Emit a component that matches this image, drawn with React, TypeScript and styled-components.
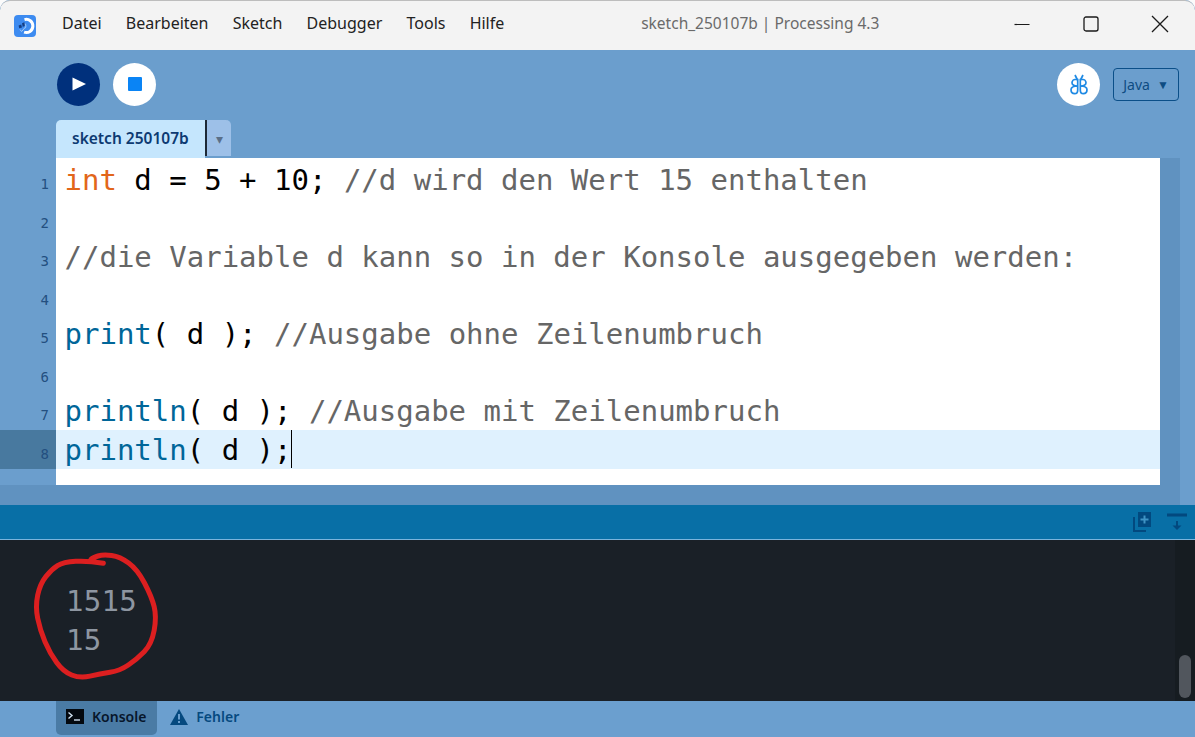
import React from 'react';
import styled, { createGlobalStyle } from 'styled-components';

const GlobalStyle = createGlobalStyle`
  html, body {
    margin: 0;
    padding: 0;
    background: #fbfbfb;
    overflow: hidden;
  }
`;

const menus = ['Datei', 'Bearbeiten', 'Sketch', 'Debugger', 'Tools', 'Hilfe'];

type Token = { text: string; kind: 'plain' | 'keyword' | 'func' | 'comment' };

const lines: Token[][] = [
  [
    { text: 'int', kind: 'keyword' },
    { text: ' d = 5 + 10; ', kind: 'plain' },
    { text: '//d wird den Wert 15 enthalten', kind: 'comment' },
  ],
  [],
  [{ text: '//die Variable d kann so in der Konsole ausgegeben werden:', kind: 'comment' }],
  [],
  [
    { text: 'print', kind: 'func' },
    { text: '( d ); ', kind: 'plain' },
    { text: '//Ausgabe ohne Zeilenumbruch', kind: 'comment' },
  ],
  [],
  [
    { text: 'println', kind: 'func' },
    { text: '( d ); ', kind: 'plain' },
    { text: '//Ausgabe mit Zeilenumbruch', kind: 'comment' },
  ],
  [
    { text: 'println', kind: 'func' },
    { text: '( d );', kind: 'plain' },
  ],
];

const ACTIVE_LINE = 7;

// traced from the hand drawn ring, in 3x units
const ringPoints = [
  [250, 70], [205, 62], [130, 66], [95, 88], [60, 132], [46, 200], [60, 270], [90, 340],
  [130, 395], [180, 415], [240, 402], [300, 392], [350, 358], [395, 312], [410, 230],
  [395, 170], [352, 88], [300, 50], [250, 43], [218, 53], [207, 64],
];

function ringPath() {
  let d = `M${ringPoints[0][0]} ${ringPoints[0][1]}`;
  for (let i = 1; i < ringPoints.length - 1; i++) {
    const [x, y] = ringPoints[i];
    const [nx, ny] = ringPoints[i + 1];
    d += ` Q${x} ${y} ${(x + nx) / 2} ${(y + ny) / 2}`;
  }
  return d;
}

export default function App() {
  return (
    <Window>
      <GlobalStyle />
      <TitleBar>
        <Logo viewBox="0 0 22 22">
          <rect width="22" height="22" rx="4" fill="#3d8bf0" />
          <path d="M10.5 4.6 a6.6 6.6 0 1 1 -0.4 12.6" fill="none" stroke="#fff" strokeWidth="3" />
          <path d="M10.5 8.6 a2.6 2.6 0 0 1 0 4.6" fill="none" stroke="#8fc0f8" strokeWidth="1.2" />
          <path d="M4.6 10.4 l2.6 -1 l0.8 3 l-2.8 0.8 z M8 8.2 l2.4 -1 l0.4 3.6 l-2 1.2 z" fill="#143f86" />
          <path d="M6 14.5 l1.6 2 l3 -3.5" fill="none" stroke="#a8cdf6" strokeWidth="1" />
        </Logo>
        <MenuBar>
          {menus.map((m) => (
            <MenuItem key={m}>{m}</MenuItem>
          ))}
        </MenuBar>
        <WindowTitle>sketch_250107b | Processing 4.3</WindowTitle>
        <WindowControls>
          <ControlButton viewBox="0 0 18 18">
            <path d="M1.5 9.5h15" stroke="#1a1a1a" strokeWidth="1.2" />
          </ControlButton>
          <ControlButton viewBox="0 0 18 18">
            <rect x="2" y="2" width="14" height="14" rx="2" fill="none" stroke="#1a1a1a" strokeWidth="1.3" />
          </ControlButton>
          <ControlButton viewBox="0 0 18 18">
            <path d="M1 1l16 16M17 1L1 17" stroke="#1a1a1a" strokeWidth="1.3" />
          </ControlButton>
        </WindowControls>
      </TitleBar>

      <Toolbar>
        <RoundButton $bg="#00307c">
          <svg width="14" height="14" viewBox="0 0 14 14">
            <path d="M0.5 0.5 L14 7 L0.5 13.5 Z" fill="#fff" />
          </svg>
        </RoundButton>
        <RoundButton $bg="#fff">
          <StopSquare />
        </RoundButton>
        <ToolbarSpacer />
        <RoundButton $bg="#fff">
          <svg width="20" height="21" viewBox="0 0 20 21" fill="none" stroke="#1f8ae4" strokeWidth="1.7">
            <path d="M6 1l2.500 5M14 1l-2.500 5" />
            <path d="M8.700 5.500v10.500c0 2-1 3.700-3 3.700S2 18.200 2 15.800c0-2.300 1.800-3.800 6.700-3.800C5 12 3 10.800 3 8.800c0-2.300 1.800-3.300 3-3.300z" />
            <path d="M11.300 5.500v10.500c0 2 1 3.700 3 3.700s3.700-1.500 3.700-3.900c0-2.300-1.800-3.800-6.700-3.800 3.700 0 5.700-1.200 5.700-3.200 0-2.300-1.800-3.300-3-3.300z" />
          </svg>
        </RoundButton>
        <ModeSelect>
          Java
          <ModeArrow>▼</ModeArrow>
        </ModeSelect>
      </Toolbar>

      <TabStrip>
        <Tab>sketch 250107b</Tab>
        <TabArrow>▾</TabArrow>
      </TabStrip>

      <EditorArea>
        <Gutter>
          {lines.map((_, i) => (
            <LineNumber key={i} $active={i === ACTIVE_LINE}>
              {i + 1}
            </LineNumber>
          ))}
        </Gutter>
        <Code>
          {lines.map((tokens, i) => (
            <CodeLine key={i} $active={i === ACTIVE_LINE}>
              {tokens.map((t, j) => (
                <CodeToken key={j} $kind={t.kind}>
                  {t.text}
                </CodeToken>
              ))}
              {i === ACTIVE_LINE && <Caret />}
            </CodeLine>
          ))}
        </Code>
        <VerticalTrack />
      </EditorArea>
      <HorizontalTrack />

      <StatusBar>
        <svg width="20" height="20" viewBox="0 0 20 20">
          <path d="M2 5v14h12" fill="none" stroke="#02497f" strokeWidth="2" />
          <rect x="6" y="0" width="13" height="15" fill="#02497f" />
          <path d="M12.500 3.500v8M8.500 7.500h8" stroke="#3f93c4" strokeWidth="2" />
        </svg>
        <svg width="20" height="20" viewBox="0 0 20 20">
          <path d="M0 3h20" stroke="#02497f" strokeWidth="3" />
          <path d="M10 9v7" stroke="#02497f" strokeWidth="2" />
          <path d="M5.500 13.500h9l-4.500 4.500z" fill="#02497f" />
        </svg>
      </StatusBar>

      <ConsolePane>
        <ConsoleText>
          <div>1515</div>
          <div>15</div>
        </ConsoleText>
        <ConsoleTrack>
          <ConsoleThumb />
        </ConsoleTrack>
        <Ring viewBox="0 0 450 450">
          <path d={ringPath()} fill="none" stroke="#dc1f20" strokeWidth="15" strokeLinecap="round" />
        </Ring>
      </ConsolePane>

      <Footer>
        <FooterTab $active>
          <svg width="18" height="15" viewBox="0 0 18 15">
            <rect width="18" height="15" fill="#04090f" />
            <path d="M2.500 3.500L6 6.500 2.500 9.500" fill="none" stroke="#cfe0f0" strokeWidth="1.400" />
            <path d="M8 11h6" stroke="#cfe0f0" strokeWidth="1.400" />
          </svg>
          Konsole
        </FooterTab>
        <FooterTab>
          <svg width="18" height="16" viewBox="0 0 18 16">
            <path d="M9 0L18 16H0Z" fill="#05497f" />
            <path d="M9 5v5.500M9 12v2" stroke="#6b9fcf" strokeWidth="2" />
          </svg>
          Fehler
        </FooterTab>
      </Footer>
    </Window>
  );
}

const uiFont = `'Noto Sans', 'Open Sans', sans-serif`;
const monoFont = `'DejaVu Sans Mono', 'Liberation Mono', monospace`;

const Window = styled.div`
  width: 1195px;
  height: 737px;
  display: flex;
  flex-direction: column;
  overflow: hidden;
  border-radius: 10px 10px 0 0;
  background: #6b9ecd;
  font-family: ${uiFont};
`;

const TitleBar = styled.div`
  height: 50px;
  flex: none;
  box-sizing: border-box;
  display: flex;
  align-items: center;
  padding-left: 14px;
  background: #f3f3f3;
  border-top: 1px solid #bdbdbd;
  border-radius: 10px 10px 0 0;
`;

const Logo = styled.svg`
  width: 22px;
  height: 22px;
  flex: none;
`;

const MenuBar = styled.div`
  display: flex;
  gap: 24.200px;
  margin-left: 26px;
  padding-bottom: 5px;
`;

const MenuItem = styled.span`
  font-size: 16px;
  color: #222;
`;

const WindowTitle = styled.div`
  width: 240px;
  margin-left: 136px;
  padding-bottom: 5px;
  font-size: 15.500px;
  color: #6a6a6a;
  white-space: nowrap;
  text-align: center;
`;

const WindowControls = styled.div`
  margin-left: auto;
  display: flex;
  gap: 51px;
  padding: 0 26px 4px 0;
`;

const ControlButton = styled.svg`
  width: 18px;
  height: 18px;
`;

const Toolbar = styled.div`
  height: 70px;
  flex: none;
  box-sizing: border-box;
  display: flex;
  align-items: center;
  gap: 13px;
  padding: 0 16px 2px 57px;
`;

const ToolbarSpacer = styled.div`
  flex: 1;
`;

const RoundButton = styled.div<{ $bg: string }>`
  width: 43px;
  height: 43px;
  border-radius: 50%;
  background: ${(p) => p.$bg};
  display: flex;
  align-items: center;
  justify-content: center;
`;

const StopSquare = styled.div`
  width: 14px;
  height: 14px;
  border-radius: 1px;
  background: #0a84f5;
`;

const ModeSelect = styled.div`
  width: 66px;
  height: 33px;
  box-sizing: border-box;
  border: 1px solid #0b4f88;
  border-radius: 4px;
  display: flex;
  align-items: center;
  justify-content: center;
  gap: 7px;
  font-size: 14px;
  color: #0e4c82;
`;

const ModeArrow = styled.span`
  font-size: 12px;
`;

const TabStrip = styled.div`
  height: 38px;
  flex: none;
  display: flex;
  align-items: flex-start;
  padding-left: 56px;
`;

const Tab = styled.div`
  width: 149px;
  height: 38px;
  box-sizing: border-box;
  padding-left: 16px;
  border-radius: 5px 0 0 0;
  background: #c5e6fd;
  font-size: 15.500px;
  font-weight: 600;
  line-height: 37px;
  color: #0d3a72;
`;

const TabArrow = styled.div`
  width: 24px;
  height: 36px;
  margin-left: 2px;
  border-radius: 0 5px 0 0;
  background: #9dc0e8;
  box-shadow: -2px 0 0 #1c2836;
  display: flex;
  align-items: center;
  justify-content: center;
  font-size: 14px;
  color: #5a6f88;
`;

const EditorArea = styled.div`
  height: 327px;
  flex: none;
  display: flex;
  padding-right: 15px;
`;

const Gutter = styled.div`
  width: 56px;
  flex: none;
  padding-top: 2px;
`;

const LineNumber = styled.div<{ $active?: boolean }>`
  height: 38.570px;
  box-sizing: border-box;
  padding: 15px 7px 0 0;
  text-align: right;
  font-family: ${monoFont};
  font-size: 14px;
  line-height: 18px;
  color: #234f80;
  background: ${(p) => (p.$active ? '#48799f' : 'transparent')};
`;

const Code = styled.div`
  flex: 1;
  padding-top: 2px;
  background: #fff;
  font-family: ${monoFont};
  font-size: 29px;
  overflow: hidden;
`;

const CodeLine = styled.div<{ $active?: boolean }>`
  height: 38.570px;
  padding-left: 8.500px;
  line-height: 40px;
  white-space: pre;
  background: ${(p) => (p.$active ? '#dff1fe' : 'transparent')};
`;

const tokenColors = {
  plain: '#000000',
  keyword: '#e2661a',
  func: '#006699',
  comment: '#666666',
};

const CodeToken = styled.span<{ $kind: Token['kind'] }>`
  color: ${(p) => tokenColors[p.$kind]};
`;

const Caret = styled.span`
  display: inline-block;
  width: 1px;
  height: 38px;
  vertical-align: top;
  background: #000;
`;

const VerticalTrack = styled.div`
  width: 20px;
  flex: none;
  background: #6092c0;
`;

const HorizontalTrack = styled.div`
  height: 20px;
  flex: none;
  margin-right: 15px;
  background: #6092c0;
`;

const StatusBar = styled.div`
  height: 35px;
  flex: none;
  box-sizing: border-box;
  display: flex;
  align-items: center;
  justify-content: flex-end;
  gap: 15px;
  padding: 0 8px 0 0;
  background: #086fa6;
  border-bottom: 1px solid #7ab4dc;
`;

const ConsolePane = styled.div`
  height: 161px;
  flex: none;
  display: flex;
  background: #1a2027;
  position: relative;
`;

const ConsoleText = styled.div`
  flex: 1;
  padding: 42px 0 0 66px;
  font-family: ${monoFont};
  font-size: 29px;
  letter-spacing: 0.300px;
  line-height: 39px;
  color: #8e96a1;
`;

const ConsoleTrack = styled.div`
  width: 20px;
  flex: none;
  box-sizing: border-box;
  display: flex;
  align-items: flex-end;
  justify-content: center;
  padding-bottom: 3px;
  background: #161c21;
`;

const ConsoleThumb = styled.div`
  width: 12px;
  height: 43px;
  border-radius: 6px;
  background: #51565d;
`;

const Ring = styled.svg`
  position: absolute;
  left: 20px;
  top: 0;
  width: 150px;
  height: 150px;
`;

const Footer = styled.div`
  height: 36px;
  flex: none;
  display: flex;
  align-items: flex-start;
  padding-left: 56px;
  background: #6b9fcf;
`;

const FooterTab = styled.div<{ $active?: boolean }>`
  height: 34px;
  box-sizing: border-box;
  display: flex;
  align-items: center;
  gap: 8px;
  padding: 0 11px 3px 10px;
  margin-right: 3px;
  border-radius: 0 0 5px 5px;
  background: ${(p) => (p.$active ? '#4a7ba5' : 'transparent')};
  font-size: 14px;
  font-weight: 600;
  color: ${(p) => (p.$active ? '#07162b' : '#05497f')};
`;
